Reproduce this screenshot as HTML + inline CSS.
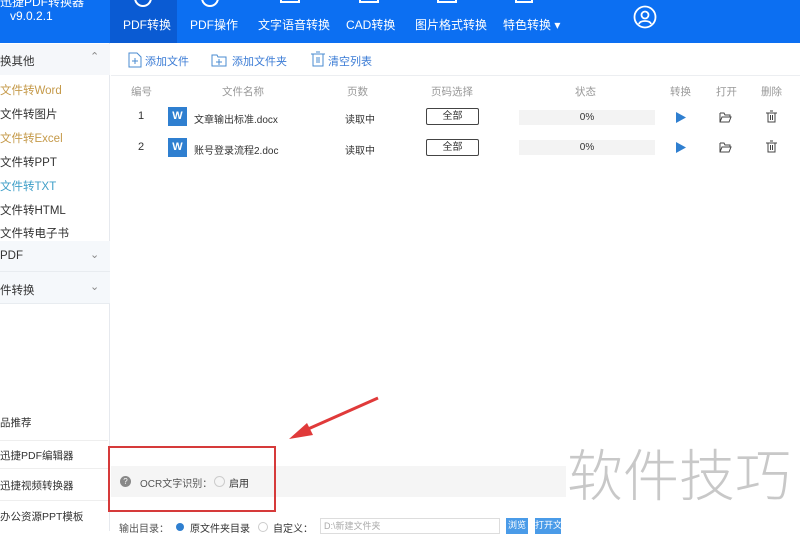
<!DOCTYPE html>
<html><head><meta charset="utf-8"><style>
*{margin:0;padding:0;box-sizing:border-box}
body{width:800px;height:531px;overflow:hidden;background:#fff;font-family:"Liberation Sans","Noto Sans CJK SC",sans-serif;font-size:11px;color:#333;position:relative}
.a{position:absolute;white-space:nowrap}
.hdr{left:0;top:0;width:800px;height:43px;background:#0c6ff2}
.tab{top:16px;color:#fff;font-size:12px}
.side{left:0;top:43px;width:110px;height:488px;border-right:1px solid #e6e9ee}
.tb{color:#3a7bd5;font-size:11px}
.th{color:#999;font-size:10.5px;top:84px}
.btn{width:53px;height:17px;border:1px solid #444;border-radius:2px;text-align:center;line-height:15px;font-size:10px}
.bar{width:136px;height:15px;background:#f3f3f3;text-align:center;line-height:15px;font-size:10px}
.w{width:19px;height:19px;background:#2f7fd0;color:#fff;font-weight:bold;text-align:center;line-height:19px;font-size:11px}
</style></head><body>
<div class="a hdr"></div>
<div class="a" style="left:110px;top:0;width:67px;height:43px;background:#0a5bd3"></div>
<div class="a" style="left:0;top:-7px;color:#fff;font-size:12px">迅捷PDF转换器</div>
<div class="a" style="left:10px;top:9px;color:#fff;font-size:12px">v9.0.2.1</div>
<div class="a tab" style="left:123px">PDF转换</div>
<div class="a tab" style="left:190px">PDF操作</div>
<div class="a tab" style="left:258px">文字语音转换</div>
<div class="a tab" style="left:346px">CAD转换</div>
<div class="a tab" style="left:415px">图片格式转换</div>
<div class="a tab" style="left:503px">特色转换 ▾</div>
<svg class="a" style="left:131px;top:-4px" width="24" height="14"><circle cx="12" cy="2" r="8" fill="none" stroke="#fff" stroke-width="2"/></svg>
<svg class="a" style="left:198px;top:-4px" width="24" height="14"><circle cx="12" cy="2" r="8" fill="none" stroke="#fff" stroke-width="2"/></svg>
<svg class="a" style="left:278px;top:-4px" width="24" height="14"><rect x="3" y="-6" width="18" height="12" fill="none" stroke="#fff" stroke-width="2"/></svg>
<svg class="a" style="left:357px;top:-4px" width="24" height="14"><rect x="3" y="-6" width="18" height="12" fill="none" stroke="#fff" stroke-width="2"/></svg>
<svg class="a" style="left:435px;top:-4px" width="24" height="14"><rect x="3" y="-6" width="18" height="12" fill="none" stroke="#fff" stroke-width="2"/></svg>
<svg class="a" style="left:512px;top:-4px" width="24" height="14"><path d="M4 0v6h16V-4" fill="none" stroke="#fff" stroke-width="2"/></svg>
<svg class="a" style="left:633px;top:5px" width="24" height="24"><circle cx="12" cy="12" r="10.5" fill="none" stroke="#fff" stroke-width="1.8"/><circle cx="12" cy="10" r="3.5" fill="none" stroke="#fff" stroke-width="1.8"/><path d="M6 19c1-4 11-4 12 0" fill="none" stroke="#fff" stroke-width="1.8"/></svg>

<div class="a side"></div>
<div class="a" style="left:0;top:44px;width:110px;height:31px;background:#f5f7fa"></div>
<div class="a" style="left:0;top:53px;font-size:11.5px">换其他</div>
<div class="a" style="left:90px;top:50px;color:#888">⌃</div>
<div class="a" style="left:0;top:82px;color:#c59a4a;font-size:11.5px">文件转Word</div>
<div class="a" style="left:0;top:106px;font-size:11.5px">文件转图片</div>
<div class="a" style="left:0;top:130px;color:#c59a4a;font-size:11.5px">文件转Excel</div>
<div class="a" style="left:0;top:154px;font-size:11.5px">文件转PPT</div>
<div class="a" style="left:0;top:178px;color:#3f9fc8;font-size:11.5px">文件转TXT</div>
<div class="a" style="left:0;top:202px;font-size:11.5px">文件转HTML</div>
<div class="a" style="left:0;top:225px;font-size:11.5px">文件转电子书</div>
<div class="a" style="left:0;top:241px;width:110px;height:31px;background:#f5f8fb;border-bottom:1px solid #e8ecf0"></div>
<div class="a" style="left:0;top:250px;font-size:11.5px">PDF</div>
<div class="a" style="left:90px;top:248px;color:#888">⌄</div>
<div class="a" style="left:0;top:272px;width:110px;height:32px;background:#f5f8fb;border-bottom:1px solid #e8ecf0"></div>
<div class="a" style="left:0;top:282px;font-size:11.5px">件转换</div>
<div class="a" style="left:90px;top:280px;color:#888">⌄</div>
<div class="a" style="left:0;top:415px;font-size:10.5px">品推荐</div>
<div class="a" style="left:0;top:440px;width:108px;height:29px;border-top:1px solid #eee;border-bottom:1px solid #eee"></div>
<div class="a" style="left:0;top:448px;font-size:10.5px">迅捷PDF编辑器</div>
<div class="a" style="left:0;top:500px;width:108px;height:1px;background:#eee"></div>
<div class="a" style="left:0;top:478px;font-size:10.5px">迅捷视频转换器</div>
<div class="a" style="left:0;top:509px;font-size:10.5px">办公资源PPT模板</div>

<div class="a" style="left:111px;top:75px;width:689px;height:1px;background:#eceef1"></div>
<svg class="a" style="left:128px;top:52px" width="14" height="16"><path d="M1 1h8l4 4v10H1z" fill="none" stroke="#4a8bd0"/><path d="M4 9h6M7 6v6" stroke="#4a8bd0"/></svg>
<div class="a tb" style="left:145px;top:53px">添加文件</div>
<svg class="a" style="left:211px;top:53px" width="16" height="14"><path d="M1 2h5l1 2h8v9H1z" fill="none" stroke="#4a8bd0"/><path d="M5 9h6M8 6v6" stroke="#4a8bd0"/></svg>
<div class="a tb" style="left:232px;top:53px">添加文件夹</div>
<svg class="a" style="left:311px;top:51px" width="14" height="16"><path d="M2 3h10v12H2zM0 3h14M5 1h4M6 6v6M8 6v6" fill="none" stroke="#4a8bd0"/></svg>
<div class="a tb" style="left:328px;top:53px">清空列表</div>

<div class="a th" style="left:131px">编号</div>
<div class="a th" style="left:222px">文件名称</div>
<div class="a th" style="left:347px">页数</div>
<div class="a th" style="left:431px">页码选择</div>
<div class="a th" style="left:575px">状态</div>
<div class="a th" style="left:670px">转换</div>
<div class="a th" style="left:716px">打开</div>
<div class="a th" style="left:761px">删除</div>

<div class="a" style="left:138px;top:110px;font-size:11px">1</div>
<div class="a w" style="left:168px;top:107px">W</div>
<div class="a" style="left:194px;top:111px;font-size:10px">文章输出标准.docx</div>
<div class="a" style="left:345px;top:111px;font-size:10px">读取中</div>
<div class="a btn" style="left:426px;top:108px">全部</div>
<div class="a bar" style="left:519px;top:110px">0%</div>
<svg class="a" style="left:675px;top:111px" width="12" height="13"><path d="M1 1l10 5.5L1 12z" fill="#2f7fd0"/></svg>
<svg class="a" style="left:719px;top:112px" width="13" height="11"><path d="M1 1h4l1 2h5v2M1 1v9h9l2-5H3l-2 5" fill="none" stroke="#444"/></svg>
<svg class="a" style="left:766px;top:110px" width="11" height="13"><path d="M2 3h7v9H2zM0 3h11M4 1h3M4.5 5v5M6.5 5v5" fill="none" stroke="#444"/></svg>

<div class="a" style="left:138px;top:141px;font-size:11px">2</div>
<div class="a w" style="left:168px;top:138px">W</div>
<div class="a" style="left:194px;top:142px;font-size:10px">账号登录流程2.doc</div>
<div class="a" style="left:345px;top:142px;font-size:10px">读取中</div>
<div class="a btn" style="left:426px;top:139px">全部</div>
<div class="a bar" style="left:519px;top:140px">0%</div>
<svg class="a" style="left:675px;top:141px" width="12" height="13"><path d="M1 1l10 5.5L1 12z" fill="#2f7fd0"/></svg>
<svg class="a" style="left:719px;top:142px" width="13" height="11"><path d="M1 1h4l1 2h5v2M1 1v9h9l2-5H3l-2 5" fill="none" stroke="#444"/></svg>
<svg class="a" style="left:766px;top:140px" width="11" height="13"><path d="M2 3h7v9H2zM0 3h11M4 1h3M4.5 5v5M6.5 5v5" fill="none" stroke="#444"/></svg>

<div class="a" style="left:111px;top:466px;width:455px;height:31px;background:#f5f5f5"></div>
<div class="a" style="left:120px;top:476px;width:11px;height:11px;border-radius:50%;background:#888;color:#fff;font-size:8px;text-align:center;line-height:11px">?</div>
<div class="a" style="left:140px;top:475px;font-size:10px;color:#555">OCR文字识别：</div>
<div class="a" style="left:214px;top:476px;width:11px;height:11px;border-radius:50%;border:1px solid #ccc"></div>
<div class="a" style="left:229px;top:475px;font-size:10px">启用</div>
<div class="a" style="left:108px;top:446px;width:168px;height:66px;border:2px solid #d63a3a"></div>
<svg class="a" style="left:285px;top:395px" width="100" height="50"><path d="M93 3L14 38" stroke="#e03a3a" stroke-width="3"/><path d="M4 44l18-16 6 12z" fill="#e03a3a"/></svg>
<div class="a" style="left:567px;top:432px;font-size:56px;color:#c8c8c8;font-family:'Noto Sans CJK SC',sans-serif;font-weight:300">软件技巧</div>

<div class="a" style="left:119px;top:520px;font-size:10px;color:#555">输出目录：</div>
<div class="a" style="left:176px;top:523px;width:8px;height:8px;border-radius:50%;background:#2f7fd0"></div>
<div class="a" style="left:190px;top:520px;font-size:10px">原文件夹目录</div>
<div class="a" style="left:258px;top:522px;width:10px;height:10px;border-radius:50%;border:1px solid #ccc"></div>
<div class="a" style="left:273px;top:520px;font-size:10px">自定义：</div>
<div class="a" style="left:320px;top:518px;width:180px;height:16px;border:1px solid #ddd;font-size:9px;color:#aaa;padding-left:3px">D:\新建文件夹</div>
<div class="a" style="left:506px;top:518px;width:22px;height:16px;background:#4a9be8;color:#fff;font-size:9px;text-align:center">浏览</div>
<div class="a" style="left:535px;top:518px;width:26px;height:16px;background:#4a9be8;color:#fff;font-size:9px;overflow:hidden">打开文</div>
</body></html>
